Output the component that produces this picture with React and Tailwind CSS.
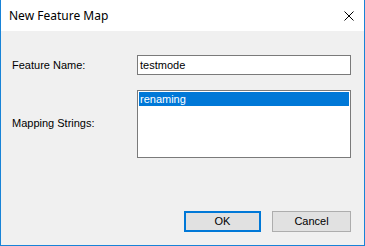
export default function App() {
  const ui = { fontFamily: '"Liberation Sans", Arial, sans-serif' }
  return (
    <div className="w-[365px] h-[246px] flex flex-col border-x border-b border-[#1883d7] bg-[#f0f0f0] overflow-hidden" style={ui}>
      <div className="h-[31px] shrink-0 bg-white flex items-center justify-between pl-[8px] pr-[10px]">
        <span className="text-[12px] text-black" style={{ fontFamily: '"Noto Sans", "Open Sans", sans-serif' }}>New Feature Map</span>
        <svg width="10" height="10" viewBox="0 0 10 10" className="block">
          <path d="M0.5 0.5 L9.5 9.5 M9.5 0.5 L0.5 9.5" stroke="#000" strokeWidth="1" fill="none" />
        </svg>
      </div>

      <div className="flex-1 flex flex-col pl-[11px] pr-[13px] text-[11px] text-black">
        <div className="flex items-center mt-[24px]">
          <span className="w-[125px] shrink-0">Feature Name:</span>
          <div className="w-[214px] h-[20px] bg-white border border-[#7a7a7a] flex items-center px-[2px]">testmode</div>
        </div>

        <div className="flex items-center mt-[15px]">
          <span className="w-[125px] shrink-0 pb-[2px]">Mapping Strings:</span>
          <div className="w-[214px] h-[68px] bg-white border border-[#7a7a7a] p-[1px]">
            <div className="h-[14px] bg-[#0078d7] text-white flex items-center pl-[1px]">renaming</div>
          </div>
        </div>

        <div className="flex justify-end gap-[11px] mt-[53px]">
          <button className="w-[77px] h-[21px] bg-[#e1e1e1] border-2 border-[#0078d7] text-[11px]">OK</button>
          <button className="w-[79px] h-[21px] bg-[#e1e1e1] border border-[#adadad] text-[11px]">Cancel</button>
        </div>
      </div>
    </div>
  )
}
